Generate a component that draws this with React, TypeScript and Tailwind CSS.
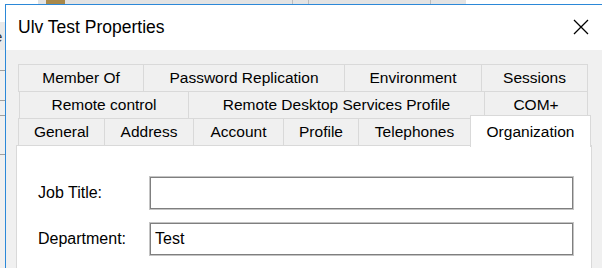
import React from 'react';

const rowOne = [
  { label: 'Member Of', w: 'w-[126px]' },
  { label: 'Password Replication', w: 'w-[202px]' },
  { label: 'Environment', w: 'w-[138px]' },
  { label: 'Sessions', w: 'w-[107px]' },
];

const rowTwo = [
  { label: 'Remote control', w: 'w-[170px]' },
  { label: 'Remote Desktop Services Profile', w: 'w-[297px]' },
  { label: 'COM+', w: 'w-[104px]' },
];

const rowThree = [
  { label: 'General', w: 'w-[87px]' },
  { label: 'Address', w: 'w-[90px]' },
  { label: 'Account', w: 'w-[91px]' },
  { label: 'Profile', w: 'w-[76px]' },
  { label: 'Telephones', w: 'w-[113px]' },
];

function Tab({ label, w }: { label: string; w: string }) {
  return (
    <div
      className={`${w} h-[28px] -ml-px first:ml-0 border border-[#d9d9d9] bg-[#f0f0f0] flex items-center justify-center text-[15.5px] text-black whitespace-nowrap`}
    >
      {label}
    </div>
  );
}

function Field({ label, value }: { label: string; value?: string }) {
  return (
    <div className="flex items-center">
      <div className="w-[112px] text-[16px] text-black">{label}</div>
      <div className="w-[423px] h-[32px] border border-[#7f7f7f] shadow-[0_0_0_1px_#c4c4c4] bg-white flex items-center pl-[4px] text-[16px] text-black">
        {value}
      </div>
    </div>
  );
}

export default function App() {
  return (
    <div className="w-[602px] h-[268px] overflow-hidden bg-white flex flex-col font-['Liberation_Sans',Arial,sans-serif]">
      {/* window behind, top edge */}
      <div className="h-[4px] flex shrink-0">
        <div className="w-[38px] bg-white" />
        <div className="w-[428px] bg-[#e3e3e3] flex">
          <div className="ml-[8px] w-[19px] bg-[#a8884a]" />
          <div className="ml-[227px] w-px bg-[#bdbdbd]" />
          <div className="ml-[15px] w-px bg-[#bdbdbd]" />
          <div className="ml-[121px] w-px bg-[#bdbdbd]" />
        </div>
        <div className="flex-1 bg-white" />
      </div>

      <div className="flex flex-1 min-h-0">
        {/* window behind, left edge */}
        <div className="w-[5px] flex flex-col shrink-0 overflow-hidden">
          <div className="h-[18px] bg-white" />
          <div className="h-[28px] bg-[#e9e9e9] flex items-center">
            <span className="text-[15px] leading-none text-[#333] -ml-[6px]">e</span>
          </div>
          <div className="flex-1 bg-[#f0f0f0] flex flex-col">
            <div className="mt-[20px] h-px bg-[#a0a0a0]" />
            <div className="mt-[29px] h-px bg-[#a0a0a0]" />
            <div className="mt-[14px] h-px bg-[#a0a0a0]" />
            <div className="mt-[38px] h-px bg-[#a0a0a0]" />
          </div>
        </div>

        {/* dialog */}
        <div className="flex-1 border-l border-t border-[#2b88d8] flex flex-col">
          <div className="h-[45px] bg-white flex items-center justify-between pl-[12px] pr-[13px] shrink-0">
            <span className="text-[17.5px] text-black">Ulv Test Properties</span>
            <svg width="16" height="16" viewBox="0 0 16 16" className="mt-[-1px]">
              <path d="M1 1 L15 15 M15 1 L1 15" stroke="#000" strokeWidth="1.3" fill="none" />
            </svg>
          </div>

          <div className="flex-1 bg-[#f0f0f0] pt-[14px] pl-[10px]">
            <div className="ml-[2px] flex">
              {rowOne.map((t) => (
                <Tab key={t.label} {...t} />
              ))}
            </div>
            <div className="ml-[3px] -mt-px flex">
              {rowTwo.map((t) => (
                <Tab key={t.label} {...t} />
              ))}
            </div>
            <div className="ml-[2px] -mt-px flex items-start h-[28px]">
              {rowThree.map((t) => (
                <Tab key={t.label} {...t} />
              ))}
              <div className="relative z-10 -ml-px -mt-[3px] w-[121px] h-[32px] border border-b-0 border-[#d9d9d9] bg-white flex items-center justify-center text-[15.5px] text-black">
                Organization
              </div>
            </div>

            <div className="-mt-px w-[576px] h-[130px] border border-[#d9d9d9] bg-white pt-[31px] pl-[21px] flex flex-col gap-[14px]">
              <Field label="Job Title:" />
              <Field label="Department:" value="Test" />
            </div>
          </div>
        </div>
      </div>
    </div>
  );
}
